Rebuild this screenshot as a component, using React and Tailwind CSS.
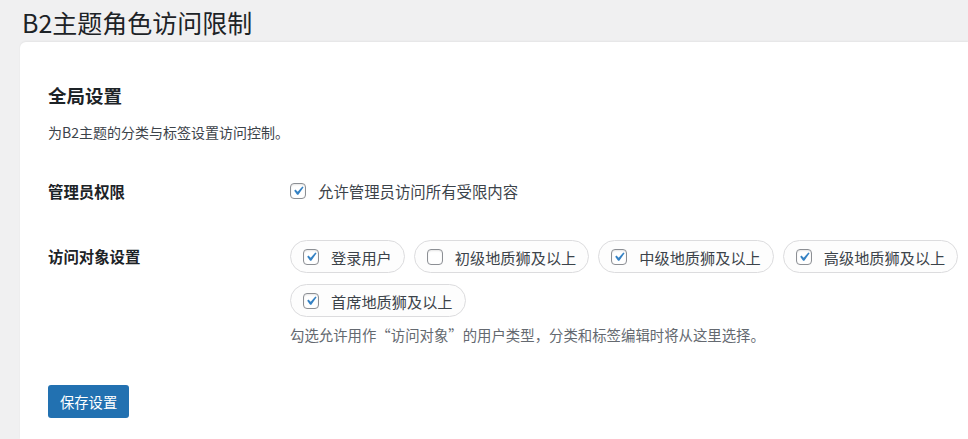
import React from 'react';

const font = { fontFamily: '"Noto Sans CJK SC", "Noto Sans", sans-serif' };

const Checkbox = ({ checked }) => (
  <span className="flex-shrink-0 w-4 h-4 rounded-[4px] border border-[#8c8f94] bg-white shadow-[inset_0_1px_2px_rgba(0,0,0,0.1)] flex items-center justify-center">
    {checked && (
      <svg width="20" height="20" viewBox="0 0 20 20" className="-m-[2px]">
        <path d="M14.83 4.89l1.34.94-5.81 8.38H9.02L5.78 9.67l1.34-1.25 2.57 2.4z" fill="#3582c4" />
      </svg>
    )}
  </span>
);

const Pill = ({ label, checked }) => (
  <div className="flex items-center gap-3 h-[33px] px-3 rounded-full border border-[#dcdcde] bg-[#fdfdfd]">
    <Checkbox checked={checked} />
    <span className="text-[15.2px] leading-6 text-[#3c434a]">{label}</span>
  </div>
);

const targets = [
  { label: '登录用户', checked: true },
  { label: '初级地质狮及以上', checked: false },
  { label: '中级地质狮及以上', checked: true },
  { label: '高级地质狮及以上', checked: true },
  { label: '首席地质狮及以上', checked: true },
];

export default function App() {
  return (
    <div className="h-[439px] overflow-hidden bg-[#f0f0f1] flex flex-col" style={font}>
      {/* 页面标题 */}
      <div className="h-[42px] pt-[6px] pl-[22px]">
        <h1 className="text-[25px] leading-[32px] text-[#1d2327]">B2主题角色访问限制</h1>
      </div>

      {/* 设置卡片 */}
      <div className="ml-5 flex-1 bg-white rounded-tl-md shadow-[0_-1px_2px_rgba(0,0,0,0.05)] pl-7">
        <h2 className="pt-[40px] text-[18.5px] leading-[26px] font-bold text-[#1d2327]">全局设置</h2>
        <p className="mt-[14px] text-[14px] leading-[21px] text-[#3c434a]">为B2主题的分类与标签设置访问控制。</p>

        <div className="mt-[36px] flex items-center">
          <div className="w-[242px] text-[15.4px] leading-6 font-bold text-[#1d2327]">管理员权限</div>
          <label className="flex items-center gap-3 h-6">
            <Checkbox checked />
            <span className="text-[15.4px] leading-6 text-[#3c434a]">允许管理员访问所有受限内容</span>
          </label>
        </div>

        <div className="mt-[37px] flex items-start">
          <div className="w-[242px] pt-[4px] text-[15.4px] leading-6 font-bold text-[#1d2327]">访问对象设置</div>
          <div className="flex flex-col">
            <div className="w-[676px] flex flex-wrap gap-x-[9px] gap-y-[11px]">
              {targets.map((t) => (
                <Pill key={t.label} label={t.label} checked={t.checked} />
              ))}
            </div>
            <p className="mt-[7px] text-[14.4px] leading-[21px] text-[#646970]">
              勾选允许用作“访问对象”的用户类型，分类和标签编辑时将从这里选择。
            </p>
          </div>
        </div>

        <button className="mt-[40px] h-[33px] px-3 rounded-[3px] bg-[#2271b1] text-white text-[14.3px] leading-[33px]">
          保存设置
        </button>
      </div>
    </div>
  );
}
